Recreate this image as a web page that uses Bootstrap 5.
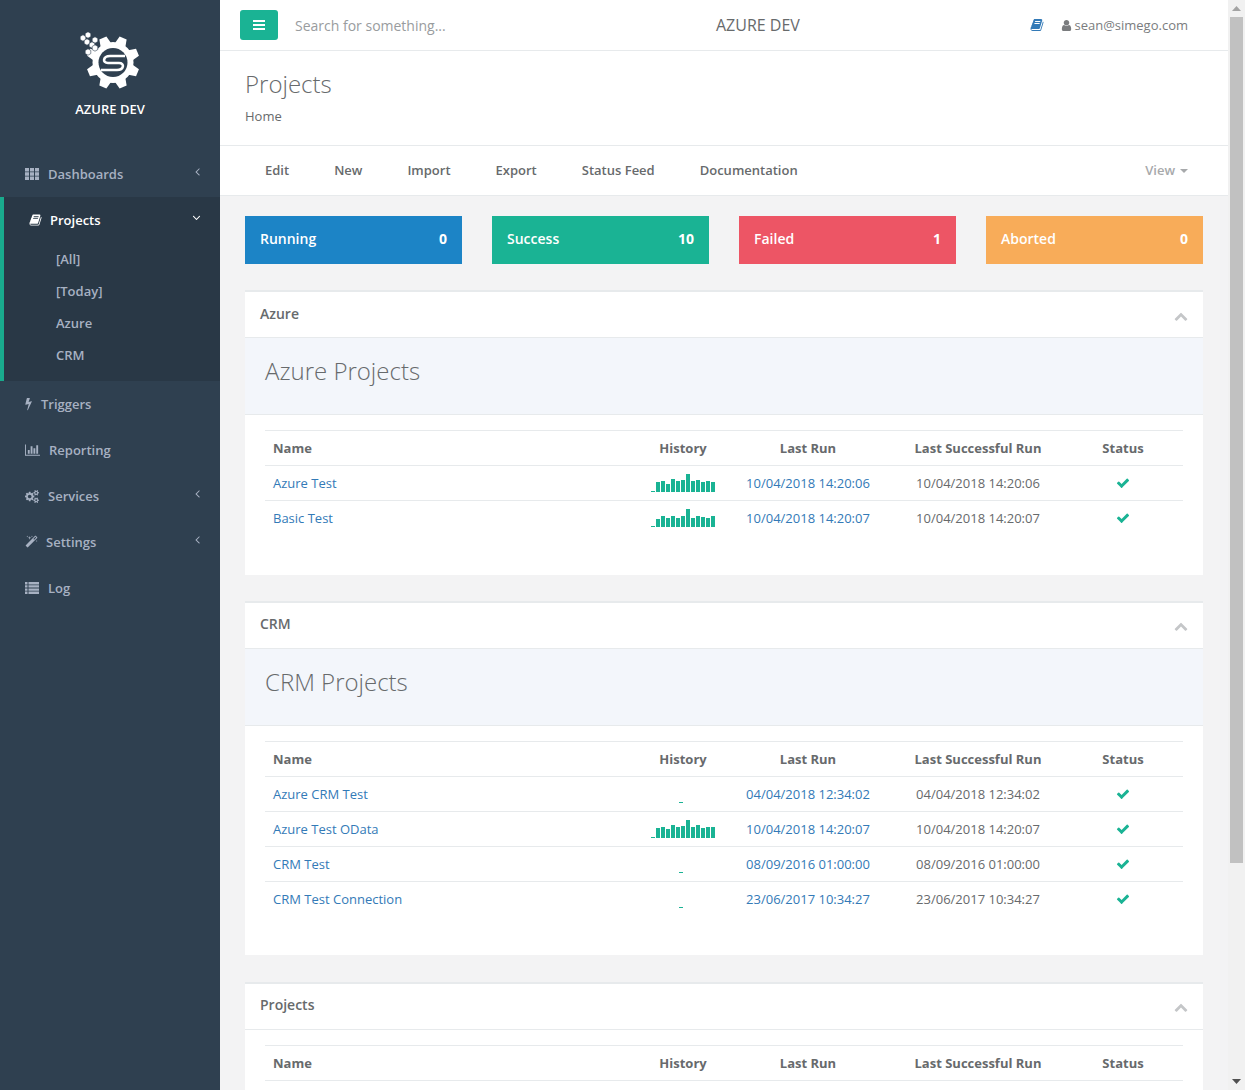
<!DOCTYPE html>
<html lang="en">
<head>
<meta charset="utf-8">
<title>Projects</title>
<link href="https://cdn.jsdelivr.net/npm/bootstrap@5.3.0/dist/css/bootstrap.min.css" rel="stylesheet">
<style>
html,body{height:1090px;overflow:hidden;margin:0}
body{font-family:"Open Sans",sans-serif;font-size:13px;color:#676a6c;background:#f3f3f4;line-height:1.42857}
a{text-decoration:none}
.ico{fill:currentColor;display:inline-block;flex:none}
.shell{height:1090px}
.side{width:220px;background:#2f4050;flex:none;height:1090px}
.brand{height:151px;color:#fff;font-weight:600}
.brand svg{margin-top:32px;display:block}
.brand span{margin-top:6px;font-size:13px}
.side-item{height:46px;color:#a7b1c2;font-weight:600;padding:0 16px 0 25px;gap:9px}
.side-item .arrow{margin-left:auto;margin-top:-6px}
.side-open{background:#293846;border-left:4px solid #19aa8d}
.side-open .side-item{color:#fff;padding:0 17px 0 25px}
.tight-ico{margin-right:-1px}
.side-sub{height:32px;color:#a7b1c2;font-weight:600;padding-left:52px;display:flex;align-items:center}
.side-sub-list{padding-bottom:10px}
.main{width:1008px;flex:none;height:1090px;overflow:hidden}
.top{height:51px;background:#fff;border-bottom:1px solid #e7eaec;padding:0 40px 0 20px}
.menu-btn{width:38px;height:30px;background:#1ab394;color:#fff;border:0;border-radius:3px;padding:0;margin-top:-1px}
.search-hint{font-size:14px;color:#999c9e;margin-left:17px;width:421px;padding-top:2px}
.top-title{font-size:16px;color:#676a6c;width:84px;white-space:nowrap;padding-top:1px}
.top-right{margin-left:auto;color:#7a7c7e}
.book-blue{color:#337ab7}
.user-ico{margin:0 1px 0 16px}
.head{height:95px;background:#fff;border-bottom:1px solid #e7eaec;padding:16px 25px 0}
.head h2{font-size:24px;font-weight:300;margin:0 0 7px;line-height:33px;color:#676a6c}
.subnav{height:50px;background:#fff;border-bottom:1px solid #e7eaec;padding:0 40px 0 45px;font-weight:600;gap:45px}
.subnav a{color:#676a6c}
.subnav a.view-link{margin-left:auto;color:#a7a9ab;font-weight:600}
.caret-mark{display:inline-block;border-top:4px solid #a7a9ab;border-left:4px solid transparent;border-right:4px solid transparent;margin-left:5px;vertical-align:2px}
.tiles{padding:20px 25px 0;gap:30px}
.tile{width:217px;height:48px;color:#fff;font-size:14px;font-weight:600;padding:0 15px 2px}
.tile span:last-child{font-weight:700}
.t-run{background:#1c84c6}.t-ok{background:#1ab394}.t-fail{background:#ed5565}.t-abort{background:#f8ac59}
.box{margin:26px 25px 0;background:#fff;border-top:2px solid #e7eaec}
.box-second{margin-top:26.4px}
.box-third{margin-top:26.6px}
.box-head{height:46px;padding:0 15px 2px;font-size:14px;font-weight:600;color:#676a6c;border-bottom:1px solid #e7eaec}
.box-head svg{color:#c4c6c8;margin-top:4px}
.band{height:77px;background:#f3f6fb;border-bottom:1px solid #e7eaec;padding:0 20px 10px;font-size:24px;font-weight:300;color:#676a6c}
.box-body{padding:15px 20px 39px}
.grid-tbl{table-layout:fixed;width:918px;margin:0;border-collapse:collapse;color:#676a6c;--bs-table-color:#676a6c}
.grid-tbl th,.grid-tbl td{height:35px;padding:0 8px;border:0;border-top:1px solid #e7eaec;vertical-align:middle;font-size:13px;box-shadow:none}
.grid-tbl th{font-weight:700;color:#676a6c}
.grid-tbl td a{color:#337ab7}
.grid-tbl .ctr{text-align:center;padding:0}
.spark{display:block;margin:0 auto}
.spark rect{fill:#1ab394;shape-rendering:crispEdges}
.tick{color:#1ab394;display:block;margin:0 auto}
.scroll{width:17px;background:#f1f1f1;height:1090px;flex:none}
.scroll-up,.scroll-down{height:17px}
.thumb{height:846px;width:13px;margin-left:2px;background:#c1c1c1}
.scroll-fill{flex:1}
</style>
</head>
<body>
<svg width="0" height="0" class="position-absolute">
<defs>
<symbol id="i-th" viewBox="0 0 14 12"><path d="M0 0h4v3.4H0zM5 0h4v3.4H5zM10 0h4v3.4h-4zM0 4.3h4v3.4H0zM5 4.3h4v3.4H5zM10 4.3h4v3.4h-4zM0 8.6h4V12H0zM5 8.6h4V12H5zM10 8.6h4V12h-4z"/></symbol>
<symbol id="i-book" viewBox="0 0 1792 1792"><path d="M1703 478q40 57 18 129l-275 906q-19 64-76.500 107.500t-122.500 43.500h-923q-77 0-148.500-53.500t-99.500-131.500q-24-67-2-127 0-4 3-27t4-37q1-8-3-21.500t-3-19.500q2-11 8-21t16.500-23.500 16.500-23.500q23-38 45-91.500t30-91.500q3-10 .5-30t-.5-28q3-11 17-28t17-23q21-36 42-92t25-90q1-9-2.500-32t.5-28q4-13 22-30.500t22-22.500q19-26 42.500-84.500t27.500-96.500q1-8-3-25.500t-2-26.500q2-8 9-18t18-23 17-21q8-12 16.500-30.500t15-35 16-36 19.500-32 26.500-23.500 36-11.500 47.500 5.500l-1 3q38-9 51-9h761q74 0 114 56t18 130l-274 906q-36 119-71.500 153.500t-128.500 34.500h-869q-27 0-38 15-11 16-1 43 24 70 144 70h923q29 0 56-15.500t35-41.500l300-987q7-22 5-57 38 15 59 43zm-1064 2q-4 13 2 22.500t20 9.500h608q13 0 25.500-9.500t16.500-22.500l21-64q4-13-2-22.500t-20-9.500h-608q-13 0-25.500 9.500t-16.500 22.500zm-83 256q-4 13 2 22.500t20 9.500h608q13 0 25.500-9.500t16.500-22.500l21-64q4-13-2-22.500t-20-9.500h-608q-13 0-25.500 9.500t-16.500 22.500z"/></symbol>
<symbol id="i-bolt" viewBox="400 230 960 1560"><path d="M1333 566q18 20 7 44l-540 1157q-13 25-42 25-4 0-14-2-17-5-25.500-19t-4.500-30l197-808-406 101q-4 1-12 1-18 0-31-11-18-15-13-39l201-825q4-14 16-23t28-9h328q19 0 32 12.500t13 29.500q0 8-5 18l-171 463 396-98q8-2 12-2 19 0 34 15z"/></symbol>
<symbol id="i-chart" viewBox="0 0 2048 1792"><path d="M640 896v512h-256v-512h256zm384-512v1024h-256v-1024h256zm1024 1152v128h-2048v-1536h128v1408h1920zm-640-896v768h-256v-768h256zm384-384v1152h-256v-1152h256z"/></symbol>
<symbol id="i-cogs" viewBox="0 0 1920 1792"><path d="M896 896q0-106-75-181t-181-75-181 75-75 181 75 181 181 75 181-75 75-181zm768 512q0-52-38-90t-90-38-90 38-38 90q0 53 37.500 90.500t90.500 37.500 90.500-37.500 37.500-90.500zm0-1024q0-52-38-90t-90-38-90 38-38 90q0 53 37.500 90.500t90.500 37.500 90.500-37.500 37.500-90.500zm-384 421v185q0 10-7 19.500t-16 10.500l-155 24q-11 35-32 76 34 48 90 115 7 11 7 20 0 12-7 19-23 30-82.500 89.500t-78.500 59.500q-11 0-21-7l-115-90q-37 19-77 31-11 108-23 155-7 24-30 24h-186q-11 0-20-7.500t-10-17.500l-23-153q-34-10-75-31l-118 89q-7 7-20 7-11 0-21-8-144-133-144-160 0-9 7-19 10-14 41-53t47-61q-23-44-35-82l-152-24q-10-1-17-9.500t-7-19.500v-185q0-10 7-19.500t16-10.500l155-24q11-35 32-76-34-48-90-115-7-11-7-20 0-12 7-20 22-30 82-89t79-59q11 0 21 7l115 90q34-18 77-32 11-108 23-154 7-24 30-24h186q11 0 20 7.500t10 17.500l23 153q34 10 75 31l118-89q8-7 20-7 11 0 21 8 144 133 144 160 0 8-7 19-12 16-42 54t-45 60q23 48 34 82l152 23q10 2 17 10.500t7 19.500zm640 533v140q0 16-149 31-12 27-30 52 51 113 51 138 0 4-4 7-122 71-124 71-8 0-46-47t-52-68q-20 2-30 2t-30-2q-14 21-52 68t-46 47q-2 0-124-71-4-3-4-7 0-25 51-138-18-25-30-52-149-15-149-31v-140q0-16 149-31 13-29 30-52-51-113-51-138 0-4 4-7 4-2 35-20t59-34 30-16q8 0 46 46.500t52 67.500q20-2 30-2t30 2q51-71 92-112l6-2q4 0 124 70 4 3 4 7 0 25-51 138 17 23 30 52 149 15 149 31zm0-1024v140q0 16-149 31-12 27-30 52 51 113 51 138 0 4-4 7-122 71-124 71-8 0-46-47t-52-68q-20 2-30 2t-30-2q-14 21-52 68t-46 47q-2 0-124-71-4-3-4-7 0-25 51-138-18-25-30-52-149-15-149-31v-140q0-16 149-31 13-29 30-52-51-113-51-138 0-4 4-7 4-2 35-20t59-34 30-16q8 0 46 46.500t52 67.500q20-2 30-2t30 2q51-71 92-112l6-2q4 0 124 70 4 3 4 7 0 25-51 138 17 23 30 52 149 15 149 31z"/></symbol>
<symbol id="i-magic" viewBox="0 0 1792 1792"><path d="M1254 581l293-293-107-107-293 293zm447-293q0 27-18 45l-1286 1286q-18 18-45 18t-45-18l-198-198q-18-18-18-45t18-45l1286-1286q18-18 45-18t45 18l198 198q18 18 18 45zm-1351-190l98 30-98 30-30 98-30-98-98-30 98-30 30-98zm350 162l196 60-196 60-60 196-60-196-196-60 196-60 60-196zm930 478l98 30-98 30-30 98-30-98-98-30 98-30 30-98zm-640-640l98 30-98 30-30 98-30-98-98-30 98-30 30-98z"/></symbol>
<symbol id="i-list" viewBox="0 0 14 12"><path d="M0 0h2.500v2.400H0zM3.500 0H14v2.400H3.500zM0 3.200h2.500v2.400H0zM3.500 3.200H14v2.400H3.500zM0 6.400h2.500v2.400H0zM3.500 6.400H14v2.400H3.500zM0 9.600h2.500V12H0zM3.500 9.600H14V12H3.500z"/></symbol>
<symbol id="i-left" viewBox="0 0 1792 1792"><path d="M1203 544q0 13-10 23l-393 393 393 393q10 10 10 23t-10 23l-50 50q-10 10-23 10t-23-10l-466-466q-10-10-10-23t10-23l466-466q10-10 23-10t23 10l50 50q10 10 10 23z"/></symbol>
<symbol id="i-down" viewBox="0 0 1792 1792"><path d="M1395 736q0 13-10 23l-466 466q-10 10-23 10t-23-10l-466-466q-10-10-10-23t10-23l50-50q10-10 23-10t23 10l393 393 393-393q10-10 23-10t23 10l50 50q10 10 10 23z"/></symbol>
<symbol id="i-up" viewBox="0 0 1792 1792"><path d="M1683 1331l-166 165q-19 19-45 19t-45-19l-531-531-531 531q-19 19-45 19t-45-19l-166-165q-19-19-19-45.500t19-45.500l742-741q19-19 45-19t45 19l742 741q19 19 19 45.500t-19 45.500z"/></symbol>
<symbol id="i-check" viewBox="0 0 1792 1792"><path d="M1671 566q0 40-28 68l-724 724-136 136q-28 28-68 28t-68-28l-136-136-362-362q-28-28-28-68t28-68l136-136q28-28 68-28t68 28l294 295 656-657q28-28 68-28t68 28l136 136q28 28 28 68z"/></symbol>
<symbol id="i-user" viewBox="0 0 1792 1792"><path d="M1536 1399q0 109-62.500 187t-150.500 78h-854q-88 0-150.500-78t-62.500-187q0-85 8.500-160.500t31.500-152 58.500-131 94-89 134.500-34.500q131 128 313 128t313-128q76 0 134.500 34.500t94 89 58.500 131 31.500 152 8.500 160.500zm-256-887q0 159-112.500 271.500t-271.500 112.500-271.500-112.500-112.500-271.500 112.500-271.500 271.500-112.500 271.500 112.500 112.500 271.500z"/></symbol>
<symbol id="i-bars" viewBox="0 0 12 10"><path d="M0 0h12v2H0zM0 4h12v2H0zM0 8h12v2H0z"/></symbol>
<path id="hx" d="M0-3.200 2.800-1.600v3.200L0 3.200-2.800 1.600v-3.200z"/>
<path id="tooth" d="M-5.500-19-3.800-26.500H3.800L5.500-19z"/>
</defs>
</svg>

<div class="shell d-flex">
  <nav class="side">
    <div class="brand d-flex flex-column align-items-center">
      <svg width="62" height="62" viewBox="0 0 62 62" fill="#fff">
        <g transform="translate(34 30.500)">
          <circle r="20.500"/>
          <use href="#tooth" transform="rotate(22.500)"/><use href="#tooth" transform="rotate(67.500)"/><use href="#tooth" transform="rotate(112.500)"/><use href="#tooth" transform="rotate(157.500)"/><use href="#tooth" transform="rotate(202.500)"/><use href="#tooth" transform="rotate(247.500)"/><use href="#tooth" transform="rotate(292.500)"/><use href="#tooth" transform="rotate(337.500)"/>
          <circle r="14.500" fill="#2f4050"/>
          <path d="M12-6.500H-3C-10-6.500-11 .5-5 .5H6C12 .5 11 7.500 4 7.500H-12" fill="none" stroke="#fff" stroke-width="2.600"/>
        </g>
        <g stroke="#2f4050" stroke-width=".6">
          <use href="#hx" x="4" y="6"/><use href="#hx" x="9" y="3"/><use href="#hx" x="8" y="10"/><use href="#hx" x="16" y="8"/><use href="#hx" x="13" y="13"/><use href="#hx" x="16" y="16"/><use href="#hx" x="9" y="20"/>
        </g>
      </svg>
      <span>AZURE DEV</span>
    </div>
    <a class="side-item d-flex align-items-center" href="#"><svg class="ico" width="14" height="12"><use href="#i-th"/></svg><span>Dashboards</span><svg class="ico arrow" width="13" height="13"><use href="#i-left"/></svg></a>
    <div class="side-open">
      <a class="side-item d-flex align-items-center" href="#"><svg class="ico tight-ico" width="13" height="14"><use href="#i-book"/></svg><span>Projects</span><svg class="ico arrow" width="13" height="13"><use href="#i-down"/></svg></a>
      <div class="side-sub-list">
        <a class="side-sub" href="#">[All]</a>
        <a class="side-sub" href="#">[Today]</a>
        <a class="side-sub" href="#">Azure</a>
        <a class="side-sub" href="#">CRM</a>
      </div>
    </div>
    <a class="side-item d-flex align-items-center" href="#"><svg class="ico" width="7" height="13"><use href="#i-bolt"/></svg><span>Triggers</span></a>
    <a class="side-item d-flex align-items-center" href="#"><svg class="ico" width="15" height="14"><use href="#i-chart"/></svg><span>Reporting</span></a>
    <a class="side-item d-flex align-items-center" href="#"><svg class="ico" width="14" height="13"><use href="#i-cogs"/></svg><span>Services</span><svg class="ico arrow" width="13" height="13"><use href="#i-left"/></svg></a>
    <a class="side-item d-flex align-items-center" href="#"><svg class="ico tight-ico" width="13" height="14"><use href="#i-magic"/></svg><span>Settings</span><svg class="ico arrow" width="13" height="13"><use href="#i-left"/></svg></a>
    <a class="side-item d-flex align-items-center" href="#"><svg class="ico" width="14" height="12"><use href="#i-list"/></svg><span>Log</span></a>
  </nav>

  <main class="main">
    <div class="top d-flex align-items-center">
      <button class="menu-btn d-flex align-items-center justify-content-center" type="button"><svg class="ico" width="12" height="10"><use href="#i-bars"/></svg></button>
      <span class="search-hint">Search for something...</span>
      <span class="top-title">AZURE DEV</span>
      <div class="top-right d-flex align-items-center">
        <svg class="ico book-blue" width="14" height="14"><use href="#i-book"/></svg>
        <svg class="ico user-ico" width="13" height="13"><use href="#i-user"/></svg>
        <span>sean@simego.com</span>
      </div>
    </div>
    <div class="head">
      <h2>Projects</h2>
      <div>Home</div>
    </div>
    <div class="subnav d-flex align-items-center">
      <a href="#">Edit</a><a href="#">New</a><a href="#">Import</a><a href="#">Export</a><a href="#">Status Feed</a><a href="#">Documentation</a>
      <a class="view-link" href="#">View<span class="caret-mark"></span></a>
    </div>
    <div class="tiles d-flex">
      <div class="tile t-run d-flex align-items-center justify-content-between"><span>Running</span><span>0</span></div>
      <div class="tile t-ok d-flex align-items-center justify-content-between"><span>Success</span><span>10</span></div>
      <div class="tile t-fail d-flex align-items-center justify-content-between"><span>Failed</span><span>1</span></div>
      <div class="tile t-abort d-flex align-items-center justify-content-between"><span>Aborted</span><span>0</span></div>
    </div>

    <section class="box">
      <div class="box-head d-flex align-items-center justify-content-between"><span>Azure</span><svg class="ico" width="14" height="14"><use href="#i-up"/></svg></div>
      <div class="band d-flex align-items-center">Azure Projects</div>
      <div class="box-body">
        <table class="table grid-tbl">
          <colgroup><col style="width:378px"><col style="width:80px"><col style="width:170px"><col style="width:170px"><col style="width:120px"></colgroup>
          <thead><tr><th>Name</th><th class="ctr">History</th><th class="ctr">Last Run</th><th class="ctr">Last Successful Run</th><th class="ctr">Status</th></tr></thead>
          <tbody>
            <tr><td><a href="#">Azure Test</a></td><td class="ctr"><svg class="spark" width="65" height="28" viewBox="0 0 65 28"><g transform="translate(0 23) scale(1 -1)"><rect x="0" width="4" height="1"/><rect x="5" width="4" height="10"/><rect x="10" width="4" height="11"/><rect x="15" width="4" height="8"/><rect x="20" width="4" height="13"/><rect x="25" width="4" height="11"/><rect x="30" width="4" height="12"/><rect x="35" width="4" height="18"/><rect x="40" width="4" height="11"/><rect x="45" width="4" height="12"/><rect x="50" width="4" height="10"/><rect x="55" width="4" height="11"/><rect x="60" width="4" height="10"/></g></svg></td><td class="ctr"><a href="#">10/04/2018 14:20:06</a></td><td class="ctr">10/04/2018 14:20:06</td><td class="ctr"><svg class="ico tick" width="14" height="14"><use href="#i-check"/></svg></td></tr>
            <tr><td><a href="#">Basic Test</a></td><td class="ctr"><svg class="spark" width="65" height="28" viewBox="0 0 65 28"><g transform="translate(0 23) scale(1 -1)"><rect x="0" width="4" height="1"/><rect x="5" width="4" height="8"/><rect x="10" width="4" height="11"/><rect x="15" width="4" height="9"/><rect x="20" width="4" height="11"/><rect x="25" width="4" height="9"/><rect x="30" width="4" height="11"/><rect x="35" width="4" height="18"/><rect x="40" width="4" height="9"/><rect x="45" width="4" height="11"/><rect x="50" width="4" height="10"/><rect x="55" width="4" height="9"/><rect x="60" width="4" height="11"/></g></svg></td><td class="ctr"><a href="#">10/04/2018 14:20:07</a></td><td class="ctr">10/04/2018 14:20:07</td><td class="ctr"><svg class="ico tick" width="14" height="14"><use href="#i-check"/></svg></td></tr>
          </tbody>
        </table>
      </div>
    </section>

    <section class="box box-second">
      <div class="box-head d-flex align-items-center justify-content-between"><span>CRM</span><svg class="ico" width="14" height="14"><use href="#i-up"/></svg></div>
      <div class="band d-flex align-items-center">CRM Projects</div>
      <div class="box-body">
        <table class="table grid-tbl">
          <colgroup><col style="width:378px"><col style="width:80px"><col style="width:170px"><col style="width:170px"><col style="width:120px"></colgroup>
          <thead><tr><th>Name</th><th class="ctr">History</th><th class="ctr">Last Run</th><th class="ctr">Last Successful Run</th><th class="ctr">Status</th></tr></thead>
          <tbody>
            <tr><td><a href="#">Azure CRM Test</a></td><td class="ctr"><svg class="spark" width="65" height="28" viewBox="0 0 65 28"><rect x="28" y="22" width="4" height="1"/></svg></td><td class="ctr"><a href="#">04/04/2018 12:34:02</a></td><td class="ctr">04/04/2018 12:34:02</td><td class="ctr"><svg class="ico tick" width="14" height="14"><use href="#i-check"/></svg></td></tr>
            <tr><td><a href="#">Azure Test OData</a></td><td class="ctr"><svg class="spark" width="65" height="28" viewBox="0 0 65 28"><g transform="translate(0 23) scale(1 -1)"><rect x="0" width="4" height="1"/><rect x="5" width="4" height="10"/><rect x="10" width="4" height="11"/><rect x="15" width="4" height="9"/><rect x="20" width="4" height="13"/><rect x="25" width="4" height="11"/><rect x="30" width="4" height="12"/><rect x="35" width="4" height="18"/><rect x="40" width="4" height="11"/><rect x="45" width="4" height="13"/><rect x="50" width="4" height="10"/><rect x="55" width="4" height="11"/><rect x="60" width="4" height="11"/></g></svg></td><td class="ctr"><a href="#">10/04/2018 14:20:07</a></td><td class="ctr">10/04/2018 14:20:07</td><td class="ctr"><svg class="ico tick" width="14" height="14"><use href="#i-check"/></svg></td></tr>
            <tr><td><a href="#">CRM Test</a></td><td class="ctr"><svg class="spark" width="65" height="28" viewBox="0 0 65 28"><rect x="28" y="22" width="4" height="1"/></svg></td><td class="ctr"><a href="#">08/09/2016 01:00:00</a></td><td class="ctr">08/09/2016 01:00:00</td><td class="ctr"><svg class="ico tick" width="14" height="14"><use href="#i-check"/></svg></td></tr>
            <tr><td><a href="#">CRM Test Connection</a></td><td class="ctr"><svg class="spark" width="65" height="28" viewBox="0 0 65 28"><rect x="28" y="22" width="4" height="1"/></svg></td><td class="ctr"><a href="#">23/06/2017 10:34:27</a></td><td class="ctr">23/06/2017 10:34:27</td><td class="ctr"><svg class="ico tick" width="14" height="14"><use href="#i-check"/></svg></td></tr>
          </tbody>
        </table>
      </div>
    </section>

    <section class="box box-third">
      <div class="box-head d-flex align-items-center justify-content-between"><span>Projects</span><svg class="ico" width="14" height="14"><use href="#i-up"/></svg></div>
      <div class="box-body">
        <table class="table grid-tbl">
          <colgroup><col style="width:378px"><col style="width:80px"><col style="width:170px"><col style="width:170px"><col style="width:120px"></colgroup>
          <thead><tr><th>Name</th><th class="ctr">History</th><th class="ctr">Last Run</th><th class="ctr">Last Successful Run</th><th class="ctr">Status</th></tr></thead>
          <tbody>
            <tr><td></td><td class="ctr"><svg class="spark" width="65" height="28" viewBox="0 0 65 28"><rect x="28" y="22" width="4" height="1"/></svg></td><td></td><td></td><td></td></tr>
          </tbody>
        </table>
      </div>
    </section>
  </main>

  <div class="scroll d-flex flex-column">
    <div class="scroll-up d-flex align-items-center justify-content-center"><svg width="9" height="5" fill="#a3a3a3"><path d="M4.500 0L9 5H0z"/></svg></div>
    <div class="thumb"></div>
    <div class="scroll-fill"></div>
    <div class="scroll-down d-flex align-items-center justify-content-center"><svg width="9" height="5" fill="#505050"><path d="M0 0h9L4.500 5z"/></svg></div>
  </div>
</div>
<script src="https://cdn.jsdelivr.net/npm/bootstrap@5.3.0/dist/js/bootstrap.bundle.min.js"></script>
</body>
</html>
